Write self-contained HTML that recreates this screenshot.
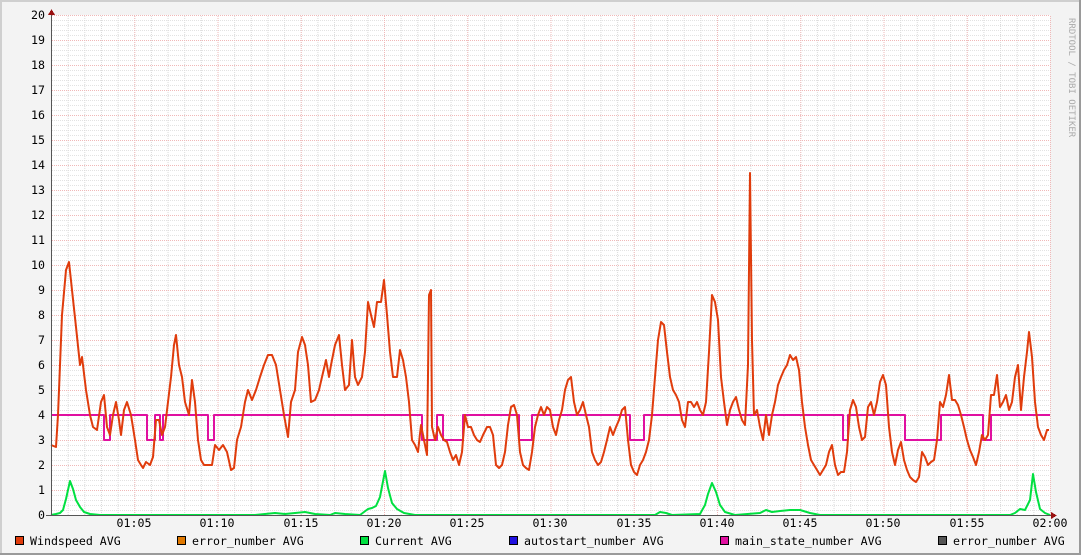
<!DOCTYPE html>
<html><head><meta charset="utf-8"><style>
html,body{margin:0;padding:0;background:#f3f3f3;width:1081px;height:555px;overflow:hidden}
svg{display:block}
text{font-family:"DejaVu Sans Mono","Liberation Mono",monospace;font-size:11.6px;fill:#000}
</style></head><body>
<svg width="1081" height="555" viewBox="0 0 1081 555" xmlns="http://www.w3.org/2000/svg" shape-rendering="crispEdges">
<defs>
<pattern id="hmin" x="0" y="15" width="4" height="5" patternUnits="userSpaceOnUse"><rect x="0" y="0" width="1" height="1" fill="#e2e2e2"/><rect x="2" y="0" width="1" height="1" fill="#e2e2e2"/></pattern>
<pattern id="vmin" x="51" y="0" width="16.65" height="2" patternUnits="userSpaceOnUse"><rect x="0" y="0" width="1" height="1" fill="#dadada"/></pattern>
<pattern id="hmaj" x="0" y="15" width="2" height="25" patternUnits="userSpaceOnUse"><rect x="0" y="0" width="1" height="1" fill="#f0b8b8"/></pattern>
<pattern id="vmaj" x="51" y="0" width="83.25" height="2" patternUnits="userSpaceOnUse"><rect x="0" y="0" width="1" height="1" fill="#f0b8b8"/></pattern>
</defs>
<rect x="0" y="0" width="1081" height="555" fill="#f3f3f3"/>
<rect x="0" y="0" width="1081" height="2" fill="#cfcfcf"/>
<rect x="0" y="0" width="2" height="555" fill="#cfcfcf"/>
<rect x="0" y="553" width="1081" height="2" fill="#9a9a9a"/>
<rect x="1079" y="0" width="2" height="555" fill="#9a9a9a"/>
<rect x="51" y="15" width="999" height="500" fill="#fff"/>
<rect x="51" y="15" width="999" height="500" fill="url(#hmin)"/>
<rect x="52" y="15" width="999" height="500" fill="url(#vmin)"/>
<rect x="51" y="15" width="999" height="500" fill="url(#hmaj)"/>
<rect x="51" y="15" width="1000" height="500" fill="url(#vmaj)"/>
<g text-anchor="end">
<text x="45" y="19">20</text><text x="45" y="44">19</text><text x="45" y="69">18</text><text x="45" y="94">17</text><text x="45" y="119">16</text><text x="45" y="144">15</text><text x="45" y="169">14</text><text x="45" y="194">13</text><text x="45" y="219">12</text><text x="45" y="244">11</text><text x="45" y="269">10</text><text x="45" y="294">9</text><text x="45" y="319">8</text><text x="45" y="344">7</text><text x="45" y="369">6</text><text x="45" y="394">5</text><text x="45" y="419">4</text><text x="45" y="444">3</text><text x="45" y="469">2</text><text x="45" y="494">1</text><text x="45" y="519">0</text>
</g>
<g text-anchor="middle">
<text x="134" y="527">01:05</text><text x="217" y="527">01:10</text><text x="301" y="527">01:15</text><text x="384" y="527">01:20</text><text x="467" y="527">01:25</text><text x="550" y="527">01:30</text><text x="634" y="527">01:35</text><text x="717" y="527">01:40</text><text x="800" y="527">01:45</text><text x="883" y="527">01:50</text><text x="967" y="527">01:55</text><text x="1050" y="527">02:00</text>
</g>
<text transform="translate(1069,18) rotate(90)" style="font-size:9px;fill:#aaa">RRDTOOL / TOBI OETIKER</text>
<g fill="none" stroke-width="2" stroke-linejoin="round" shape-rendering="auto">
<polyline stroke="#00e040" points="51,515 56,514 60,513 63,510 66,499 70,481 73,489 76,500 80,507 84,512 90,514 100,515 255,515 265,514 275,513 285,514 295,513 305,512 315,514 330,515 335,513 345,514 360,515 368,509 372,508 376,506 380,497 385,471 388,488 392,503 397,509 404,513 415,515 655,515 660,512 666,513 672,515 700,514 705,505 708,494 712,483 716,492 720,505 725,512 735,515 760,513 766,510 772,512 780,511 790,510 800,510 810,513 820,515 1010,515 1015,513 1020,509 1025,510 1030,500 1033,474 1036,492 1040,509 1045,513 1050,515"/>
<polyline stroke="#e010a0" points="51,415 104,415 104,440 110,440 110,415 147,415 147,440 155,440 155,415 160,415 160,440 163,440 163,415 208,415 208,440 214,440 214,415 422,415 422,440 437,440 437,415 443,415 443,440 463,440 463,415 519,415 519,440 532,440 532,415 630,415 630,440 644,440 644,415 843,415 843,440 848,440 848,415 905,415 905,440 941,440 941,415 983,415 983,440 991,440 991,415 1050,415"/>
<polyline stroke="#e03c0c" points="51,445 56,447 58,415 62,315 66,270 69,262 72,290 76,327 80,365 82,357 86,390 90,415 93,427 97,430 101,402 104,395 107,427 110,435 113,415 116,402 119,420 121,435 124,410 127,402 131,415 135,440 138,460 141,465 143,468 146,462 150,465 153,457 156,420 159,420 162,435 165,427 168,402 171,377 174,345 176,335 179,365 182,377 185,402 189,415 192,380 195,402 198,440 201,460 204,465 208,465 212,465 215,445 219,450 223,445 227,452 231,470 234,468 237,440 241,427 245,402 248,390 252,400 256,390 260,377 264,365 268,355 272,355 276,365 280,390 284,415 288,437 291,402 295,390 298,352 302,337 305,345 308,365 311,402 315,400 319,390 322,377 326,360 329,377 331,365 335,345 339,335 342,365 345,390 349,385 352,340 355,377 358,385 362,377 365,352 368,302 371,315 374,327 377,302 381,302 384,280 387,315 390,352 393,377 397,377 400,350 403,360 406,377 409,402 412,440 415,445 418,452 421,425 424,440 427,455 429,295 431,290 432,427 435,440 438,427 441,435 444,440 447,442 450,452 453,460 456,455 459,465 462,452 465,415 468,427 471,427 474,435 477,440 480,442 483,435 487,427 490,427 493,435 496,465 499,468 502,465 505,452 508,425 511,407 514,405 517,415 520,452 523,465 526,468 529,470 532,452 535,427 538,415 541,407 544,415 547,407 550,410 553,427 556,435 559,420 562,410 565,390 568,380 571,377 574,402 577,415 580,410 583,402 586,415 589,427 592,452 595,460 598,465 601,462 604,452 607,440 610,427 613,435 616,427 619,420 622,410 625,407 628,440 631,465 634,472 637,475 640,465 643,460 646,452 649,440 652,415 655,377 658,340 661,322 664,325 667,352 670,377 673,390 676,395 679,402 682,420 685,427 688,402 691,402 694,407 697,402 700,410 703,415 706,402 709,352 712,295 715,302 718,320 721,377 724,402 727,425 730,410 733,402 736,397 739,410 742,420 745,425 748,365 750,173 752,340 754,415 757,410 760,427 763,440 766,415 769,435 772,415 775,402 778,385 781,377 784,370 787,365 790,355 793,360 796,357 799,370 802,402 805,427 808,445 811,460 814,465 817,470 820,475 823,470 826,465 829,452 832,445 835,465 838,475 841,472 844,472 847,452 850,410 853,400 856,407 859,427 862,440 865,437 868,407 871,402 874,415 877,402 880,382 883,375 886,385 889,427 892,452 895,465 898,450 901,442 904,460 907,470 910,477 913,480 916,482 919,477 922,452 925,457 928,465 931,462 934,460 937,440 940,402 943,407 946,395 949,375 952,400 955,400 958,405 961,415 964,427 967,440 970,450 973,457 976,465 979,452 982,435 985,440 988,435 991,395 994,395 997,375 1000,407 1003,402 1006,395 1009,410 1012,402 1015,377 1018,365 1021,410 1024,377 1027,352 1029,332 1032,357 1035,402 1038,427 1041,435 1044,440 1047,430 1049,430"/>
</g>
<line x1="51.5" y1="10" x2="51.5" y2="516" stroke="#555" stroke-width="1"/>
<line x1="46" y1="515.5" x2="1055" y2="515.5" stroke="#555" stroke-width="1"/>
<polygon points="48,15 55,15 51.5,9" fill="#9a1010"/>
<polygon points="1051,512 1051,519 1057,515.5" fill="#9a1010"/>
<g stroke="#000" stroke-width="1">
<rect x="15.5" y="536.5" width="8" height="8" fill="#e03c0c"/>
<rect x="177.5" y="536.5" width="8" height="8" fill="#e07800"/>
<rect x="360.5" y="536.5" width="8" height="8" fill="#00e040"/>
<rect x="509.5" y="536.5" width="8" height="8" fill="#2010e0"/>
<rect x="720.5" y="536.5" width="8" height="8" fill="#e010a0"/>
<rect x="938.5" y="536.5" width="8" height="8" fill="#555"/>
</g>
<text x="30" y="545">Windspeed AVG</text>
<text x="192" y="545">error_number AVG</text>
<text x="375" y="545">Current AVG</text>
<text x="524" y="545">autostart_number AVG</text>
<text x="735" y="545">main_state_number AVG</text>
<text x="953" y="545">error_number AVG</text>
</svg>
</body></html>
